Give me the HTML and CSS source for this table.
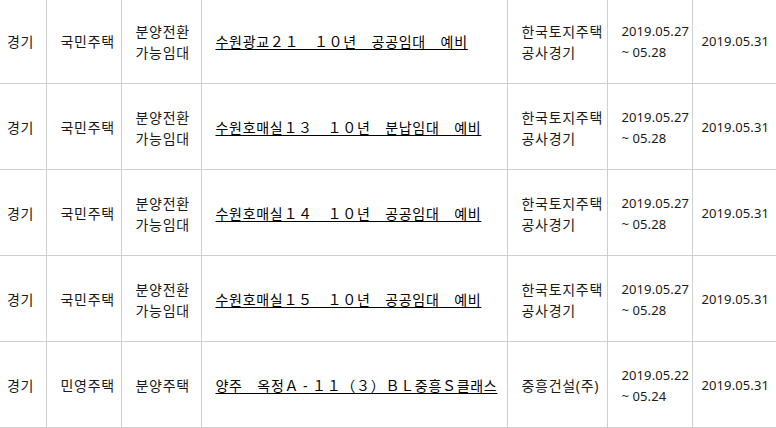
FILE: index.html
```html
<!DOCTYPE html>
<html lang="ko">
<head>
<meta charset="utf-8">
<title>분양 일정</title>
<link rel="stylesheet" href="styles.css">
</head>
<body>
<table class="list">
  <colgroup>
    <col class="c-area"><col class="c-type"><col class="c-kind"><col class="c-name"><col class="c-org"><col class="c-date"><col class="c-ann">
  </colgroup>
  <tbody>
    <tr>
      <td class="area">경기</td>
      <td>국민주택</td>
      <td>분양전환<br>가능임대</td>
      <td><a href="#">수원광교２１　１０년　공공임대　예비</a></td>
      <td>한국토지주택<br>공사경기</td>
      <td class="date">2019.05.27<br>~ 05.28</td>
      <td class="date ann">2019.05.31</td>
    </tr>
    <tr>
      <td class="area">경기</td>
      <td>국민주택</td>
      <td>분양전환<br>가능임대</td>
      <td><a href="#">수원호매실１３　１０년　분납임대　예비</a></td>
      <td>한국토지주택<br>공사경기</td>
      <td class="date">2019.05.27<br>~ 05.28</td>
      <td class="date ann">2019.05.31</td>
    </tr>
    <tr>
      <td class="area">경기</td>
      <td>국민주택</td>
      <td>분양전환<br>가능임대</td>
      <td><a href="#">수원호매실１４　１０년　공공임대　예비</a></td>
      <td>한국토지주택<br>공사경기</td>
      <td class="date">2019.05.27<br>~ 05.28</td>
      <td class="date ann">2019.05.31</td>
    </tr>
    <tr>
      <td class="area">경기</td>
      <td>국민주택</td>
      <td>분양전환<br>가능임대</td>
      <td><a href="#">수원호매실１５　１０년　공공임대　예비</a></td>
      <td>한국토지주택<br>공사경기</td>
      <td class="date">2019.05.27<br>~ 05.28</td>
      <td class="date ann">2019.05.31</td>
    </tr>
    <tr>
      <td class="area">경기</td>
      <td>민영주택</td>
      <td>분양주택</td>
      <td><a href="#">양주　옥정Ａ<span class="dash"> - </span>１１（３）ＢＬ중흥Ｓ클래스</a></td>
      <td>중흥건설(주)</td>
      <td class="date">2019.05.22<br>~ 05.24</td>
      <td class="date ann">2019.05.31</td>
    </tr>
  </tbody>
</table>
</body>
</html>
```

FILE: styles.css
```css
html, body {
  margin: 0;
  padding: 0;
  background: #fff;
  overflow: hidden;
}

.list {
  border-collapse: collapse;
  table-layout: fixed;
  width: 802px;
  margin-top: -3px;
  font-family: "Noto Sans", "Noto Sans CJK KR", sans-serif;
  font-size: 14px;
  line-height: 21px;
  letter-spacing: 0.7px;
  color: #1a1a1a;
}

.c-area { width: 46px; }
.c-type { width: 75px; }
.c-kind { width: 80px; }
.c-name { width: 306px; }
.c-org  { width: 100px; }
.c-date { width: 85px; }
.c-ann  { width: 110px; }

.list td {
  height: 83px;
  padding: 2px 0 0 14px;
  border: 1px solid #cfcfcf;
  vertical-align: middle;
  text-align: left;
  white-space: nowrap;
  overflow: hidden;
}

.list td.area {
  padding-left: 7px;
  border-left: none;
}

.list td.date {
  font-size: 13px;
  letter-spacing: 0.1px;
}

.list td.ann {
  padding-left: 9px;
  border-right: none;
}

.list a {
  color: #000;
  text-decoration: underline;
  text-underline-offset: 2px;
}

.dash {
  word-spacing: -0.6px;
}
```
